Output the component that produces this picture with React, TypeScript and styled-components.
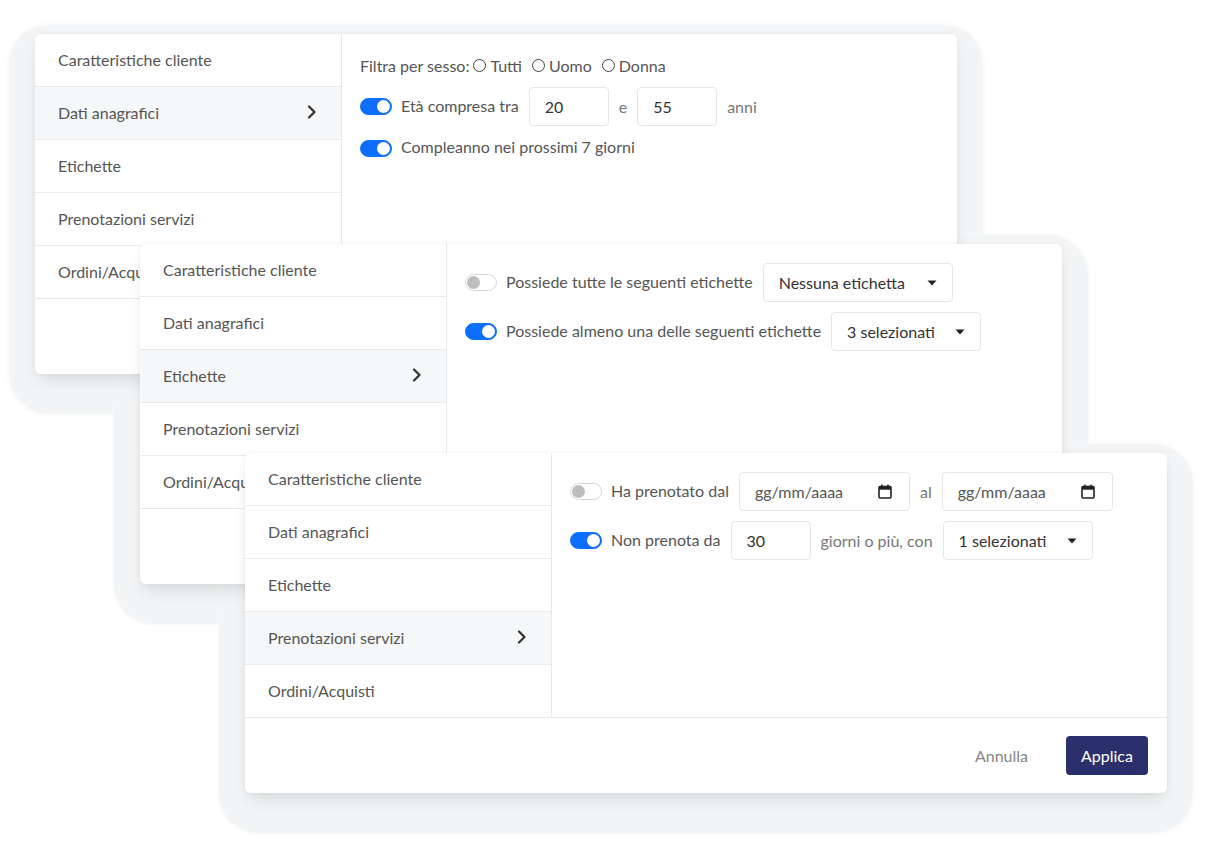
import React from "react";
import styled, { createGlobalStyle } from "styled-components";

const CARD_W = 922;
const CARD_H = 340;

const GlobalStyle = createGlobalStyle`
  *, *::before, *::after {
    box-sizing: border-box;
  }
  html,
  body {
    margin: 0;
    padding: 0;
    background: #fff;
  }
  body {
    font-family: Lato, "Open Sans", sans-serif;
    font-size: 16px;
    color: #555;
  }
`;

const Canvas = styled.div`
  position: relative;
  width: 1231px;
  height: 864px;
  overflow: hidden;
  background: #fff;
`;

const Halo = styled.div<{ $x: number; $y: number }>`
  position: absolute;
  left: ${(p) => p.$x - 26}px;
  top: ${(p) => p.$y - 9}px;
  width: ${CARD_W + 52}px;
  height: ${CARD_H + 49}px;
  border-radius: 40px;
  background: #f3f4f5;
  box-shadow: 0 0 4px 1px #f6f7f8;
`;

const Card = styled.div<{ $x: number; $y: number }>`
  position: absolute;
  left: ${(p) => p.$x}px;
  top: ${(p) => p.$y}px;
  width: ${CARD_W}px;
  height: ${CARD_H}px;
  background: #fff;
  border-radius: 6px;
  box-shadow: 0 10px 16px -4px rgba(0, 0, 0, 0.1), 0 0 6px rgba(0, 0, 0, 0.05);
  display: flex;
  flex-direction: column;
  overflow: hidden;
`;

const Body = styled.div`
  display: flex;
  height: 264px;
  flex-shrink: 0;
`;

const Menu = styled.ul`
  list-style: none;
  margin: 0;
  padding: 0;
  width: 307px;
  flex-shrink: 0;
  border-right: 1px solid #e8e8e8;
`;

const MenuItem = styled.li<{ $active?: boolean }>`
  height: 53px;
  display: flex;
  align-items: center;
  justify-content: space-between;
  padding: 0 24px 2px 23px;
  font-size: 16px;
  color: #555;
  border-bottom: 1px solid #ebebeb;
  background: ${(p) => (p.$active ? "#f6f7f8" : "#fff")};

  &:last-child {
    height: 52px;
    border-bottom: none;
  }
`;

const Pane = styled.div`
  flex: 1;
  display: flex;
  flex-direction: column;
  gap: 10px;
  padding: 19px 18px;
`;

const Row = styled.div`
  display: flex;
  align-items: center;
  gap: 10px;
  min-height: 24px;
  font-size: 16px;
  color: #555;
`;

const Label = styled.span`
  margin-top: -3px;
  white-space: nowrap;
`;

const Muted = styled.span`
  color: #777;
  white-space: nowrap;
`;

const Track = styled.span<{ $on?: boolean }>`
  position: relative;
  width: 32px;
  height: 17px;
  flex-shrink: 0;
  margin-right: -1px;
  border-radius: 9px;
  background: ${(p) => (p.$on ? "#0d6efd" : "#fff")};
  border: 1px solid ${(p) => (p.$on ? "#0d6efd" : "#d6d6d6")};

  &::after {
    content: "";
    position: absolute;
    top: 1px;
    left: ${(p) => (p.$on ? "16px" : "1px")};
    width: 13px;
    height: 13px;
    border-radius: 50%;
    background: ${(p) => (p.$on ? "#fff" : "#bdbdbd")};
  }
`;

const RadioOption = styled.label`
  display: inline-flex;
  align-items: center;
  gap: 4px;
  margin-left: 10px;

  &:first-of-type {
    margin-left: 4px;
  }
`;

const RadioCircle = styled.span`
  width: 13px;
  height: 13px;
  border: 1px solid #444;
  border-radius: 50%;
`;

const RadioRow = styled(Row)`
  gap: 0;
`;

const TextField = styled.input`
  width: 80px;
  height: 39px;
  padding: 0 15px;
  border: 1px solid #e6e6e6;
  border-radius: 4px;
  font: inherit;
  font-size: 16px;
  color: #333;
  background: #fff;
  outline: none;
`;

const DateField = styled.div`
  width: 171px;
  height: 39px;
  display: flex;
  align-items: center;
  justify-content: space-between;
  padding: 0 17px 0 15px;
  border: 1px solid #e6e6e6;
  border-radius: 4px;
  color: #555;
`;

const Select = styled.div<{ $width: number }>`
  width: ${(p) => p.$width}px;
  height: 39px;
  display: flex;
  align-items: center;
  justify-content: space-between;
  padding: 0 15px 0 15px;
  border: 1px solid #e6e6e6;
  border-radius: 4px;
  color: #333;
  white-space: nowrap;
`;

const Footer = styled.div`
  flex: 1;
  display: flex;
  align-items: center;
  justify-content: flex-end;
  gap: 38px;
  padding-right: 19px;
  border-top: 1px solid #e8e8e8;
`;

const GhostButton = styled.button`
  border: none;
  background: none;
  padding: 0;
  font: inherit;
  font-size: 16px;
  color: #858585;
`;

const PrimaryButton = styled.button`
  width: 82px;
  height: 39px;
  border: none;
  border-radius: 4px;
  background: #2b2f6b;
  font: inherit;
  font-size: 16px;
  color: #fff;
`;

const Chevron = () => (
  <svg width="10" height="14" viewBox="0 0 10 14">
    <polyline
      points="2,1.5 7.5,7 2,12.5"
      fill="none"
      stroke="#333"
      strokeWidth="2.2"
      strokeLinecap="round"
      strokeLinejoin="round"
    />
  </svg>
);

const Caret = () => (
  <svg width="10" height="6" viewBox="0 0 10 6">
    <polygon points="0.5,0.5 9.5,0.5 5,5.5" fill="#222" />
  </svg>
);

const CalendarIcon = () => (
  <svg width="14" height="15" viewBox="0 0 14 15">
    <rect x="1" y="2.5" width="12" height="11.5" rx="1" fill="none" stroke="#222" strokeWidth="1.6" />
    <rect x="1" y="2.5" width="12" height="3.2" fill="#222" />
    <rect x="3.2" y="0.6" width="1.6" height="2.6" fill="#222" />
    <rect x="9.2" y="0.6" width="1.6" height="2.6" fill="#222" />
  </svg>
);

const Switch = ({ on }: { on?: boolean }) => <Track $on={on} />;

const menuItems = [
  "Caratteristiche cliente",
  "Dati anagrafici",
  "Etichette",
  "Prenotazioni servizi",
  "Ordini/Acquisti",
];

// Dati anagrafici
const PersonalPane = () => (
  <Pane>
    <RadioRow>
      <span>Filtra per sesso:</span>
      {["Tutti", "Uomo", "Donna"].map((opt) => (
        <RadioOption key={opt}>
          <RadioCircle />
          {opt}
        </RadioOption>
      ))}
    </RadioRow>
    <Row>
      <Switch on />
      <Label>Età compresa tra</Label>
      <TextField readOnly defaultValue="20" />
      <Muted>e</Muted>
      <TextField readOnly defaultValue="55" />
      <Muted>anni</Muted>
    </Row>
    <Row>
      <Switch on />
      <Label>Compleanno nei prossimi 7 giorni</Label>
    </Row>
  </Pane>
);

// Etichette
const TagsPane = () => (
  <Pane>
    <Row>
      <Switch />
      <Label>Possiede tutte le seguenti etichette</Label>
      <Select $width={190}>
        Nessuna etichetta
        <Caret />
      </Select>
    </Row>
    <Row>
      <Switch on />
      <Label>Possiede almeno una delle seguenti etichette</Label>
      <Select $width={150}>
        3 selezionati
        <Caret />
      </Select>
    </Row>
  </Pane>
);

// Prenotazioni servizi
const BookingsPane = () => (
  <Pane>
    <Row>
      <Switch />
      <Label>Ha prenotato dal</Label>
      <DateField>
        gg/mm/aaaa
        <CalendarIcon />
      </DateField>
      <Muted>al</Muted>
      <DateField>
        gg/mm/aaaa
        <CalendarIcon />
      </DateField>
    </Row>
    <Row>
      <Switch on />
      <Label>Non prenota da</Label>
      <TextField readOnly defaultValue="30" />
      <Muted>giorni o più, con</Muted>
      <Select $width={150}>
        1 selezionati
        <Caret />
      </Select>
    </Row>
  </Pane>
);

const windows = [
  { x: 35, y: 34, active: 1, pane: <PersonalPane /> },
  { x: 140, y: 244, active: 2, pane: <TagsPane /> },
  { x: 245, y: 453, active: 3, pane: <BookingsPane /> },
];

const App = () => {
  return (
    <>
      <GlobalStyle />
      <Canvas>
        {windows.map((w) => (
          <Halo key={"h" + w.x} $x={w.x} $y={w.y} />
        ))}
        {windows.map((w, idx) => (
          <Card key={w.x} $x={w.x} $y={w.y}>
            <Body>
              <Menu>
                {menuItems.map((item, i) => (
                  <MenuItem key={item} $active={i === w.active}>
                    {item}
                    {i === w.active && <Chevron />}
                  </MenuItem>
                ))}
              </Menu>
              {w.pane}
            </Body>
            {/* only the front card shows its actions, the others are covered */}
            <Footer>
              {idx === windows.length - 1 && (
                <>
                  <GhostButton>Annulla</GhostButton>
                  <PrimaryButton>Applica</PrimaryButton>
                </>
              )}
            </Footer>
          </Card>
        ))}
      </Canvas>
    </>
  );
};

export default App;
